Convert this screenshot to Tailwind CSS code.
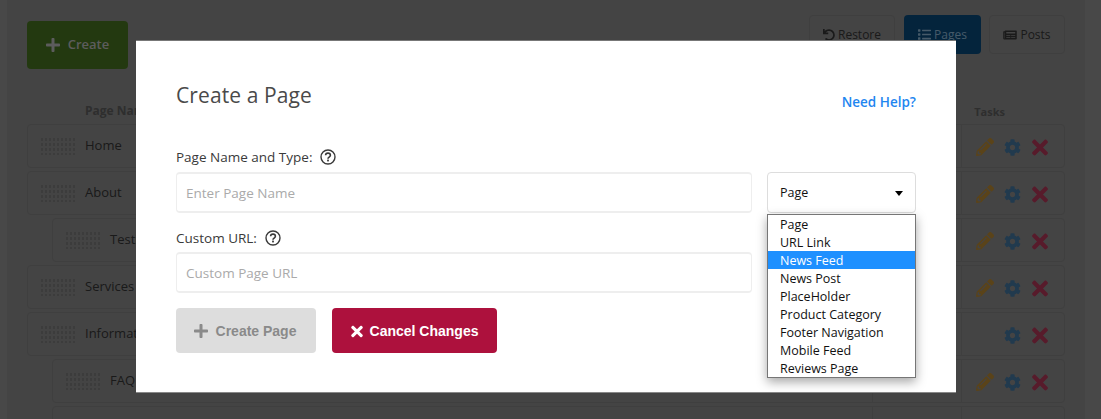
<!DOCTYPE html>
<html lang="en">
<head>
<meta charset="UTF-8">
<title>Create a Page</title>
<script src="https://cdn.jsdelivr.net/npm/@tailwindcss/browser@4"></script>
</head>
<body class="relative h-[419px] w-[1101px] overflow-hidden bg-[#a0a0a0] font-['Open_Sans',sans-serif]">

<svg class="hidden">
  <symbol id="plus" viewBox="0 0 448 512"><path fill="currentColor" d="M416 208H272V64c0-17.67-14.33-32-32-32h-32c-17.67 0-32 14.33-32 32v144H32c-17.67 0-32 14.33-32 32v32c0 17.67 14.33 32 32 32h144v144c0 17.67 14.33 32 32 32h32c17.67 0 32-14.33 32-32V304h144c17.67 0 32-14.33 32-32v-32c0-17.67-14.33-32-32-32z"/></symbol>
  <symbol id="times" viewBox="0 0 352 512"><path fill="currentColor" d="M242.72 256l100.07-100.07c12.28-12.28 12.28-32.19 0-44.48l-22.24-22.24c-12.28-12.28-32.19-12.28-44.48 0L176 189.28 75.93 89.21c-12.28-12.28-32.19-12.28-44.48 0L9.21 111.45c-12.28 12.28-12.28 32.19 0 44.48L109.28 256 9.21 356.07c-12.28 12.28-12.28 32.19 0 44.48l22.24 22.24c12.28 12.28 32.2 12.28 44.48 0L176 322.72l100.07 100.07c12.28 12.28 32.2 12.28 44.48 0l22.24-22.24c12.28-12.28 12.28-32.19 0-44.48L242.72 256z"/></symbol>
  <symbol id="pencil" viewBox="0 0 512 512"><path fill="currentColor" d="M497.9 142.1l-46.1 46.1c-4.7 4.7-12.3 4.7-17 0l-111-111c-4.7-4.7-4.7-12.3 0-17l46.1-46.1c18.7-18.7 49.1-18.7 67.9 0l60.1 60.1c18.8 18.7 18.8 49.1 0 67.9zM284.2 99.8L21.6 362.4.4 483.9c-2.9 16.4 11.4 30.6 27.8 27.8l121.5-21.3 262.6-262.6c4.7-4.7 4.7-12.3 0-17l-111-111c-4.8-4.7-12.4-4.7-17.1 0zM124.1 339.9c-5.5-5.5-5.5-14.3 0-19.8l154-154c5.5-5.5 14.3-5.5 19.8 0s5.5 14.3 0 19.8l-154 154c-5.5 5.5-14.3 5.5-19.8 0zM88 424h48v36.3l-64.5 11.3-31.1-31.1L51.7 376H88v48z"/></symbol>
  <symbol id="cog" viewBox="0 0 512 512"><path fill="currentColor" d="M487.4 315.7l-42.6-24.6c4.3-23.2 4.3-47 0-70.2l42.6-24.6c4.9-2.8 7.1-8.6 5.5-14-11.1-35.6-30-67.8-54.7-94.6-3.8-4.1-10-5.1-14.8-2.3L380.8 110c-17.9-15.4-38.5-27.3-60.8-35.1V25.8c0-5.6-3.9-10.5-9.4-11.7-36.7-8.2-74.3-7.8-109.2 0-5.5 1.2-9.4 6.1-9.4 11.7V75c-22.2 7.9-42.8 19.8-60.8 35.1L88.7 85.5c-4.9-2.8-11-1.9-14.8 2.3-24.7 26.7-43.6 58.9-54.7 94.6-1.7 5.4.6 11.2 5.5 14L67.3 221c-4.3 23.2-4.3 47 0 70.2l-42.6 24.6c-4.9 2.8-7.1 8.6-5.5 14 11.1 35.6 30 67.8 54.7 94.6 3.8 4.1 10 5.1 14.8 2.3l42.6-24.6c17.9 15.4 38.5 27.3 60.8 35.1v49.2c0 5.6 3.9 10.5 9.4 11.7 36.7 8.2 74.3 7.8 109.2 0 5.5-1.2 9.4-6.1 9.4-11.7v-49.2c22.2-7.9 42.8-19.8 60.8-35.1l42.6 24.6c4.9 2.8 11 1.9 14.8-2.3 24.7-26.7 43.6-58.9 54.7-94.6 1.5-5.5-.7-11.3-5.6-14.1zM256 336c-44.1 0-80-35.9-80-80s35.9-80 80-80 80 35.9 80 80-35.9 80-80 80z"/></symbol>
  <symbol id="undo" viewBox="0 0 512 512"><path fill="currentColor" d="M212.333 224.333H12c-6.627 0-12-5.373-12-12V12C0 5.373 5.373 0 12 0h48c6.627 0 12 5.373 12 12v78.112C117.773 39.279 184.26 7.47 258.175 8.007c136.906.994 246.448 111.623 246.157 248.532C504.041 393.258 393.12 504 256.333 504c-64.089 0-122.496-24.313-166.51-64.215-5.099-4.622-5.334-12.554-.467-17.42l33.967-33.967c4.474-4.474 11.662-4.717 16.401-.525C170.76 415.336 211.58 432 256.333 432c97.268 0 176-78.716 176-176 0-97.267-78.716-176-176-176-58.496 0-110.28 28.476-142.274 72.333h98.274c6.627 0 12 5.373 12 12v48c0 6.627-5.373 12-12 12z"/></symbol>
  <symbol id="list" viewBox="0 0 512 512"><path fill="currentColor" d="M80 368H16a16 16 0 0 0-16 16v64a16 16 0 0 0 16 16h64a16 16 0 0 0 16-16v-64a16 16 0 0 0-16-16zm0-320H16A16 16 0 0 0 0 64v64a16 16 0 0 0 16 16h64a16 16 0 0 0 16-16V64a16 16 0 0 0-16-16zm0 160H16a16 16 0 0 0-16 16v64a16 16 0 0 0 16 16h64a16 16 0 0 0 16-16v-64a16 16 0 0 0-16-16zm416 176H176a16 16 0 0 0-16 16v32a16 16 0 0 0 16 16h320a16 16 0 0 0 16-16v-32a16 16 0 0 0-16-16zm0-320H176a16 16 0 0 0-16 16v32a16 16 0 0 0 16 16h320a16 16 0 0 0 16-16V80a16 16 0 0 0-16-16zm0 160H176a16 16 0 0 0-16 16v32a16 16 0 0 0 16 16h320a16 16 0 0 0 16-16v-32a16 16 0 0 0-16-16z"/></symbol>
  <symbol id="news" viewBox="0 0 576 512"><path fill="currentColor" d="M552 64H88c-13.255 0-24 10.745-24 24v8H24c-13.255 0-24 10.745-24 24v272c0 30.928 25.072 56 56 56h472c26.51 0 48-21.49 48-48V88c0-13.255-10.745-24-24-24zM56 400a8 8 0 0 1-8-8V144h16v248a8 8 0 0 1-8 8zm236-16H140c-6.627 0-12-5.373-12-12v-8c0-6.627 5.373-12 12-12h152c6.627 0 12 5.373 12 12v8c0 6.627-5.373 12-12 12zm208 0H348c-6.627 0-12-5.373-12-12v-8c0-6.627 5.373-12 12-12h152c6.627 0 12 5.373 12 12v8c0 6.627-5.373 12-12 12zm-208-96H140c-6.627 0-12-5.373-12-12v-8c0-6.627 5.373-12 12-12h152c6.627 0 12 5.373 12 12v8c0 6.627-5.373 12-12 12zm208 0H348c-6.627 0-12-5.373-12-12v-8c0-6.627 5.373-12 12-12h152c6.627 0 12 5.373 12 12v8c0 6.627-5.373 12-12 12zm0-96H140c-6.627 0-12-5.373-12-12v-40c0-6.627 5.373-12 12-12h360c6.627 0 12 5.373 12 12v40c0 6.627-5.373 12-12 12z"/></symbol>
  <symbol id="help" viewBox="0 0 16 16"><circle cx="8" cy="8" r="7" fill="none" stroke="currentColor" stroke-width="1.4"/><path fill="none" stroke="currentColor" stroke-width="1.6" d="M5.6 6.3c0-1.4 1-2.2 2.4-2.2s2.4.8 2.4 2.1c0 1.9-2.4 1.8-2.4 3.5"/><rect x="7.1" y="10.6" width="1.8" height="1.8" fill="currentColor"/></symbol>
</svg>

<!-- page behind the modal -->
<div class="mx-[7px] h-full w-[1078px] overflow-hidden bg-[#979797] px-5 pt-[15px]">
  <div class="flex items-start justify-between">
    <button class="mt-[6px] flex h-12 w-[101px] items-center justify-center gap-2 rounded-sm bg-[#4e7f24] text-[13px] font-semibold text-[#ccc]">
      <svg class="h-4 w-[14px]"><use href="#plus"/></svg>Create
    </button>
    <div class="flex gap-2 text-[12px] font-medium text-[#3a3a3a]">
      <button class="flex h-[39px] w-[86px] items-center justify-center gap-[3px] rounded-sm border border-[#8c8c8c]"><svg class="h-3 w-3"><use href="#undo"/></svg>Restore</button>
      <button class="ml-[1px] flex h-[39px] w-[77px] items-center justify-center gap-[3px] rounded-sm bg-[#0b5085] text-[#9bc8e9]"><svg class="h-[13px] w-[13px]"><use href="#list"/></svg>Pages</button>
      <button class="flex h-[39px] w-[76px] items-center justify-center gap-[3px] rounded-sm border border-[#8c8c8c]"><svg class="h-3 w-[14px]"><use href="#news"/></svg>Posts</button>
    </div>
  </div>
  <div class="flex h-[55px] items-end pb-[4px] pl-[58px] pr-[60px] text-[12px] font-bold text-[#666]">
    <span>Page Name</span><span class="ml-auto text-[11px]">Tasks</span>
  </div>
  <div class="flex flex-col gap-[3px] text-[13px] text-[#3a3a3a]">
    <div class="flex h-11 shrink-0 items-center rounded-sm border border-[#8c8c8c] pl-[12px]">
      <div class="h-[18px] w-[35px] bg-[radial-gradient(#868686_1px,transparent_1px)] bg-size-[4px_5px]"></div>
      <span class="ml-[10px]">Home</span>
      <div class="ml-auto h-full w-[89px] border-l border-[#8c8c8c]"></div>
      <div class="flex h-full w-[103px] items-center justify-end border-l border-[#8c8c8c] pr-[16px] pt-[2px]">
        <svg class="h-[18px] w-[18px] text-[#c89438]"><use href="#pencil"/></svg>
        <svg class="ml-[10px] h-[17px] w-[17px] text-[#4a80ad]"><use href="#cog"/></svg>
        <svg class="ml-[11px] h-[23px] w-[16px] text-[#c23c5f]"><use href="#times"/></svg>
      </div>
    </div>
    <div class="flex h-11 shrink-0 items-center rounded-sm border border-[#8c8c8c] pl-[12px]">
      <div class="h-[18px] w-[35px] bg-[radial-gradient(#868686_1px,transparent_1px)] bg-size-[4px_5px]"></div>
      <span class="ml-[10px]">About</span>
      <div class="ml-auto h-full w-[89px] border-l border-[#8c8c8c]"></div>
      <div class="flex h-full w-[103px] items-center justify-end border-l border-[#8c8c8c] pr-[16px] pt-[2px]">
        <svg class="h-[18px] w-[18px] text-[#c89438]"><use href="#pencil"/></svg>
        <svg class="ml-[10px] h-[17px] w-[17px] text-[#4a80ad]"><use href="#cog"/></svg>
        <svg class="ml-[11px] h-[23px] w-[16px] text-[#c23c5f]"><use href="#times"/></svg>
      </div>
    </div>
    <div class="ml-[25px] flex h-11 shrink-0 items-center rounded-sm border border-[#8c8c8c] pl-[12px]">
      <div class="h-[18px] w-[35px] bg-[radial-gradient(#868686_1px,transparent_1px)] bg-size-[4px_5px]"></div>
      <span class="ml-[10px]">Testi</span>
      <div class="ml-auto h-full w-[89px] border-l border-[#8c8c8c]"></div>
      <div class="flex h-full w-[103px] items-center justify-end border-l border-[#8c8c8c] pr-[16px] pt-[2px]">
        <svg class="h-[18px] w-[18px] text-[#c89438]"><use href="#pencil"/></svg>
        <svg class="ml-[10px] h-[17px] w-[17px] text-[#4a80ad]"><use href="#cog"/></svg>
        <svg class="ml-[11px] h-[23px] w-[16px] text-[#c23c5f]"><use href="#times"/></svg>
      </div>
    </div>
    <div class="flex h-11 shrink-0 items-center rounded-sm border border-[#8c8c8c] pl-[12px]">
      <div class="h-[18px] w-[35px] bg-[radial-gradient(#868686_1px,transparent_1px)] bg-size-[4px_5px]"></div>
      <span class="ml-[10px]">Services</span>
      <div class="ml-auto h-full w-[89px] border-l border-[#8c8c8c]"></div>
      <div class="flex h-full w-[103px] items-center justify-end border-l border-[#8c8c8c] pr-[16px] pt-[2px]">
        <svg class="h-[18px] w-[18px] text-[#c89438]"><use href="#pencil"/></svg>
        <svg class="ml-[10px] h-[17px] w-[17px] text-[#4a80ad]"><use href="#cog"/></svg>
        <svg class="ml-[11px] h-[23px] w-[16px] text-[#c23c5f]"><use href="#times"/></svg>
      </div>
    </div>
    <div class="flex h-11 shrink-0 items-center rounded-sm border border-[#8c8c8c] pl-[12px]">
      <div class="h-[18px] w-[35px] bg-[radial-gradient(#868686_1px,transparent_1px)] bg-size-[4px_5px]"></div>
      <span class="ml-[10px]">Information</span>
      <div class="ml-auto h-full w-[89px] border-l border-[#8c8c8c]"></div>
      <div class="flex h-full w-[103px] items-center justify-end border-l border-[#8c8c8c] pr-[16px] pt-[2px]">
        <svg class="ml-[10px] h-[17px] w-[17px] text-[#4a80ad]"><use href="#cog"/></svg>
        <svg class="ml-[11px] h-[23px] w-[16px] text-[#c23c5f]"><use href="#times"/></svg>
      </div>
    </div>
    <div class="ml-[25px] flex h-11 shrink-0 items-center rounded-sm border border-[#8c8c8c] pl-[12px]">
      <div class="h-[18px] w-[35px] bg-[radial-gradient(#868686_1px,transparent_1px)] bg-size-[4px_5px]"></div>
      <span class="ml-[10px]">FAQ</span>
      <div class="ml-auto h-full w-[89px] border-l border-[#8c8c8c]"></div>
      <div class="flex h-full w-[103px] items-center justify-end border-l border-[#8c8c8c] pr-[16px] pt-[2px]">
        <svg class="h-[18px] w-[18px] text-[#c89438]"><use href="#pencil"/></svg>
        <svg class="ml-[10px] h-[17px] w-[17px] text-[#4a80ad]"><use href="#cog"/></svg>
        <svg class="ml-[11px] h-[23px] w-[16px] text-[#c23c5f]"><use href="#times"/></svg>
      </div>
    </div>
    <div class="ml-[25px] flex h-11 shrink-0 items-center rounded-sm border border-[#8c8c8c] pl-[12px]">
      <div class="ml-auto h-full w-[89px] border-l border-[#8c8c8c]"></div>
      <div class="h-full w-[103px] border-l border-[#8c8c8c]"></div>
    </div>
  </div>
</div>

<!-- overlay -->
<div class="absolute inset-0 bg-black/55"></div>

<!-- modal -->
<div class="absolute left-[136px] top-[41px] h-[351px] w-[820px] bg-white px-10 shadow-[0_1px_0_#888,0_-1px_0_#777]">
  <div class="flex items-start justify-between pt-[38px]">
    <h2 class="text-[21px] font-medium leading-[32px] tracking-[0.1px] text-[#4a4a4a]">Create a Page</h2>
    <a class="mt-[14px] text-[13.5px] font-semibold leading-[18px] text-[#1e86f0]">Need Help?</a>
  </div>
  <label class="mt-[35px] flex h-[22px] items-center gap-[8px] text-[13.5px] font-medium text-[#3a3a3a]">
    Page Name and Type:
    <svg class="h-4 w-4"><use href="#help"/></svg>
  </label>
  <div class="mt-[4px] flex gap-[15px]">
    <div class="flex h-[41px] w-[576px] items-center rounded-sm border border-y-2 border-[#eeeeee] px-[9px] pt-px text-[13.5px] text-[#aaa]">Enter Page Name</div>
    <div class="flex h-[41px] w-[149px] items-center justify-between rounded-sm border border-[#dddddd] px-[12px] pt-[2px] text-[12.5px] text-[#111]">
      Page
      <span class="h-0 w-0 border-x-[4.5px] border-t-[5px] border-x-transparent border-t-black"></span>
    </div>
  </div>
  <label class="mt-[14px] flex h-[22px] items-center gap-[8px] text-[13.5px] font-medium text-[#3a3a3a]">
    Custom URL:
    <svg class="h-4 w-4"><use href="#help"/></svg>
  </label>
  <div class="mt-[3px] flex h-[41px] w-[576px] items-center rounded-sm border border-y-2 border-[#eeeeee] px-[9px] pt-px text-[13.5px] text-[#aaa]">Custom Page URL</div>
  <div class="mt-[15px] flex gap-4 font-['Liberation_Sans',sans-serif] text-[14px] font-bold">
    <button class="flex h-[45px] w-[140px] items-center justify-center gap-2 rounded-sm bg-[#dddddd] pr-[2px] pt-px text-[#8a8a8a]">
      <svg class="h-4 w-[14px]"><use href="#plus"/></svg>Create Page
    </button>
    <button class="flex h-[45px] w-[165px] items-center justify-center gap-[7px] rounded-sm bg-[#ad113d] pt-px text-white">
      <svg class="h-[17px] w-[12px]"><use href="#times"/></svg>Cancel Changes
    </button>
  </div>
</div>

<!-- open select list -->
<ul class="absolute left-[767px] top-[214px] w-[149px] border border-[#767676] bg-white text-[12.5px] leading-[20px] text-[#111] shadow-[0_4px_10px_rgba(0,0,0,0.35)]">
  <li class="h-[18px] pl-[12px]">Page</li>
  <li class="h-[18px] pl-[12px]">URL Link</li>
  <li class="h-[18px] bg-[#1e90ff] pl-[12px] text-white">News Feed</li>
  <li class="h-[18px] pl-[12px]">News Post</li>
  <li class="h-[18px] pl-[12px]">PlaceHolder</li>
  <li class="h-[18px] pl-[12px]">Product Category</li>
  <li class="h-[18px] pl-[12px]">Footer Navigation</li>
  <li class="h-[18px] pl-[12px]">Mobile Feed</li>
  <li class="h-[18px] pl-[12px]">Reviews Page</li>
</ul>

</body>
</html>
